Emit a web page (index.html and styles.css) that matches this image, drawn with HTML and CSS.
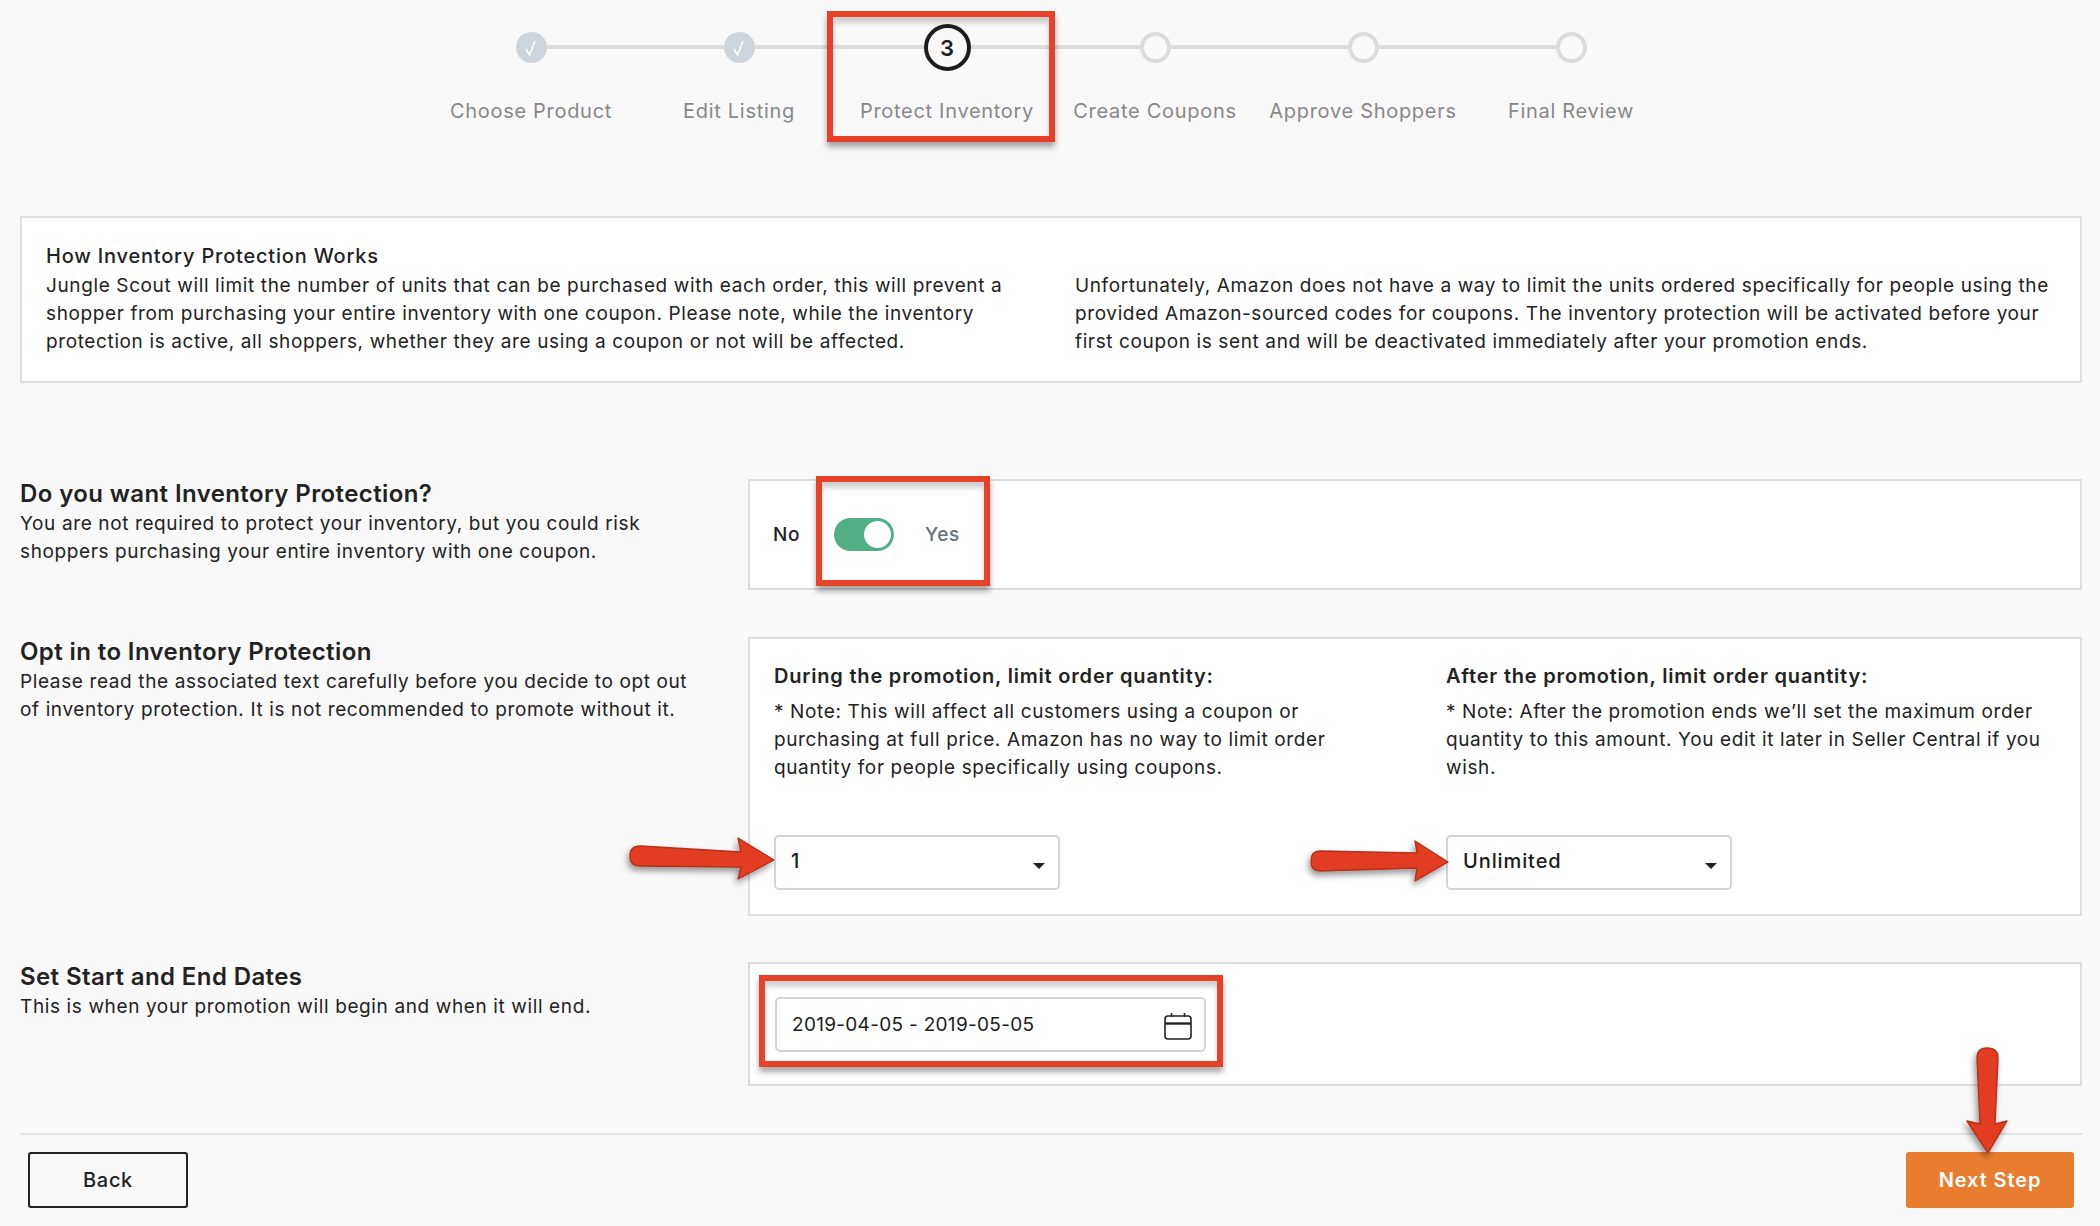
FILE: index.html
```html
<!DOCTYPE html>
<html lang="en">
<head>
<meta charset="utf-8">
<title>Protect Inventory</title>
<link rel="stylesheet" href="styles.css">
</head>
<body>
<ol class="stepper">
  <li class="step done"><span class="dot"><svg width="18" height="18" viewBox="0 0 18 18"><path d="M4 10 L7.5 16 L13 2" fill="none" stroke="#fff" stroke-width="1.6"/></svg></span><span class="label">Choose Product</span></li>
  <li class="step done"><span class="dot"><svg width="18" height="18" viewBox="0 0 18 18"><path d="M4 10 L7.5 16 L13 2" fill="none" stroke="#fff" stroke-width="1.6"/></svg></span><span class="label">Edit Listing</span></li>
  <li class="step active"><span class="dot">3</span><span class="label">Protect Inventory</span></li>
  <li class="step"><span class="dot"></span><span class="label">Create Coupons</span></li>
  <li class="step"><span class="dot"></span><span class="label">Approve Shoppers</span></li>
  <li class="step"><span class="dot"></span><span class="label">Final Review</span></li>
</ol>

<section class="info">
  <div>
    <h3 class="info-title">How Inventory Protection Works</h3>
    <p>Jungle Scout will limit the number of units that can be purchased with each order, this will prevent a<br>shopper from purchasing your entire inventory with one coupon. Please note, while the inventory<br>protection is active, all shoppers, whether they are using a coupon or not will be affected.</p>
  </div>
  <p class="info-right">Unfortunately, Amazon does not have a way to limit the units ordered specifically for people using the<br>provided Amazon-sourced codes for coupons. The inventory protection will be activated before your<br>first coupon is sent and will be deactivated immediately after your promotion ends.</p>
</section>

<section class="row row-first">
  <div class="intro">
    <h2>Do you want Inventory Protection?</h2>
    <p>You are not required to protect your inventory, but you could risk<br>shoppers purchasing your entire inventory with one coupon.</p>
  </div>
  <div class="panel panel-toggle">
    <span class="no">No</span>
    <span class="toggle"><span class="knob"></span></span>
    <span class="yes">Yes</span>
  </div>
</section>

<section class="row row-opt">
  <div class="intro">
    <h2>Opt in to Inventory Protection</h2>
    <p>Please read the associated text carefully before you decide to opt out<br>of inventory protection. It is not recommended to promote without it.</p>
  </div>
  <div class="panel panel-limits">
    <div class="limit">
      <h4>During the promotion, limit order quantity:</h4>
      <p>* Note: This will affect all customers using a coupon or<br>purchasing at full price. Amazon has no way to limit order<br>quantity for people specifically using coupons.</p>
      <div class="select">1<span class="caret"></span></div>
    </div>
    <div class="limit">
      <h4>After the promotion, limit order quantity:</h4>
      <p>* Note: After the promotion ends we’ll set the maximum order<br>quantity to this amount. You edit it later in Seller Central if you<br>wish.</p>
      <div class="select">Unlimited<span class="caret"></span></div>
    </div>
  </div>
</section>

<section class="row">
  <div class="intro">
    <h2>Set Start and End Dates</h2>
    <p>This is when your promotion will begin and when it will end.</p>
  </div>
  <div class="panel panel-dates">
    <div class="date">2019-04-05 - 2019-05-05
      <svg class="cal" width="28" height="28" viewBox="0 0 28 28"><rect x="1" y="4" width="26" height="23" rx="3" fill="none" stroke="#222" stroke-width="1.6"/><path d="M1 11.5H27" stroke="#222" stroke-width="2.4"/><path d="M7.5 1V5M20.5 1V5" stroke="#222" stroke-width="1.6"/></svg>
    </div>
  </div>
</section>

<footer class="footer">
  <button class="btn btn-back">Back</button>
  <button class="btn btn-next">Next Step</button>
</footer>

<div class="mark mark-step"></div>
<div class="mark mark-toggle"></div>
<div class="mark mark-date"></div>

<svg class="arrow arrow-a" width="155" height="50" viewBox="0 0 155 50"><defs><filter id="s" x="-20%" y="-30%" width="140%" height="170%"><feDropShadow dx="-2" dy="4" stdDeviation="3" flood-color="#000" flood-opacity=".4"/></filter></defs><path d="M12 12 Q2 12 2 22 Q2 32 12 32 L113 33 L110 45 L146 26 L110 4 L113 18 Z" fill="#e23c22" stroke="#b5301c" stroke-width="1.4" stroke-linejoin="round" filter="url(#s)"/></svg>
<svg class="arrow arrow-b" width="145" height="50" viewBox="0 0 145 50"><path d="M10 13 Q1 13 1 23 Q1 33 10 33 L107 30 L105 43 L138 24 L105 3 L107 15 Z" fill="#e23c22" stroke="#b5301c" stroke-width="1.4" stroke-linejoin="round" filter="url(#s)"/></svg>
<svg class="arrow arrow-c" width="50" height="112" viewBox="0 0 50 112"><path d="M15 12 Q15 2 25 2 Q36 2 36 12 L33 78 L45 75 L26 107 L5 75 L18 78 Z" fill="#e23c22" stroke="#b5301c" stroke-width="1.4" stroke-linejoin="round" filter="url(#s)"/></svg>
</body>
</html>
```

FILE: styles.css
```css
*, *::before { box-sizing: border-box; }
html, body { margin: 0; }
body {
  position: relative;
  height: 1226px;
  overflow: hidden;
  padding: 0 18px 0 20px;
  background: #f9f9f9;
  color: #222;
  font: 400 19px/28px Inter, "Liberation Sans", sans-serif;
  letter-spacing: .62px;
}
h2, h3, h4, p { margin: 0; font-weight: 400; }

.stepper {
  display: flex;
  justify-content: center;
  list-style: none;
  margin: 0 0 91px;
  padding: 24px 0 0;
}
.step {
  position: relative;
  width: 208px;
  display: flex;
  flex-direction: column;
  align-items: center;
}
.step::before {
  content: "";
  position: absolute;
  top: 21px;
  left: 50%;
  width: 100%;
  height: 4px;
  background: #dcdcdc;
}
.step:last-child::before { display: none; }
.dot {
  position: relative;
  width: 47px;
  height: 47px;
  display: flex;
  align-items: center;
  justify-content: center;
  margin-bottom: 26px;
}
.dot::before {
  content: "";
  position: absolute;
  left: 8px;
  top: 8px;
  width: 31px;
  height: 31px;
  border-radius: 50%;
  border: 4px solid #dcdcdc;
  background: #f9f9f9;
}
.done .dot::before { background: #cdd5dc; border-color: #cdd5dc; }
.active .dot::before { left: 0; top: 0; width: 47px; height: 47px; border-color: #1c1c1c; z-index: -1; }
.dot svg { position: relative; }
.active .dot { z-index: 1; font-weight: 600; font-size: 22px; letter-spacing: 0; color: #1c1c1c; isolation: isolate; }
.label { color: #888; font-size: 20px; letter-spacing: .7px; white-space: nowrap; }

.info {
  display: grid;
  grid-template-columns: 1029px 1fr;
  height: 167px;
  padding: 23px 24px 0;
  background: #fff;
  border: 2px solid #dedede;
}
.info-title { line-height: 31px; font-size: 20px; font-weight: 500; letter-spacing: .8px; }
.info-right { padding-top: 31px; }
.info p { white-space: nowrap; }

.row {
  display: grid;
  grid-template-columns: 728px 1fr;
  margin-top: 46px;
}
.row-first { margin-top: 96px; }
.row-opt { margin-top: 47px; }
.intro h2 { font-size: 24px; line-height: 30px; font-weight: 600; letter-spacing: .4px; margin-bottom: 1px; }
.intro p { white-space: nowrap; }

.panel { background: #fff; border: 2px solid #dedede; }
.panel-toggle {
  display: flex;
  align-items: center;
  height: 111px;
  padding-left: 23px;
}
.no { font-weight: 500; width: 61px; }
.toggle {
  display: block;
  position: relative;
  width: 60px;
  height: 33px;
  border-radius: 17px;
  background: #52ae85;
  margin-right: 31px;
}
.knob {
  position: absolute;
  right: 3px;
  top: 3px;
  width: 27px;
  height: 27px;
  border-radius: 50%;
  background: #fff;
}
.yes { color: #65727d; font-weight: 500; }

.panel-limits {
  display: grid;
  grid-template-columns: 672px 1fr;
  height: 279px;
  padding: 23px 23px 0 24px;
}
.limit h4 { font-size: 20px; font-weight: 600; letter-spacing: .8px; margin-bottom: 8px; }
.limit p { white-space: nowrap; }
.select {
  position: relative;
  width: 286px;
  height: 55px;
  margin-top: 53px;
  padding: 10px 15px;
  background: #fff;
  border: 2px solid #d4d4d4;
  border-radius: 5px;
  font-size: 20px;
  letter-spacing: .9px;
  font-weight: 500;
  color: #1c1c1c;
}
.caret {
  position: absolute;
  right: 13px;
  top: 26px;
  width: 0;
  height: 0;
  border: 6px solid transparent;
  border-top-color: #222;
  border-bottom: 0;
}

.panel-dates { height: 124px; padding: 33px 25px 0; }
.date {
  display: flex;
  align-items: center;
  justify-content: space-between;
  width: 431px;
  height: 55px;
  padding: 0 12px 0 15px;
  background: #fff;
  border: 2px solid #d4d4d4;
  border-radius: 5px;
  letter-spacing: .3px;
  color: #1c1c1c;
}
.cal { margin-top: 3px; }

.footer {
  display: flex;
  justify-content: space-between;
  margin-top: 47px;
  padding: 17px 8px 0 8px;
  border-top: 2px solid #e3e3e3;
}
.btn {
  height: 56px;
  font: 500 20px Inter, "Liberation Sans", sans-serif;
  letter-spacing: .7px;
  border-radius: 3px;
  cursor: pointer;
}
.btn-back { width: 160px; background: transparent; border: 2px solid #222; color: #222; }
.btn-next { width: 168px; background: #e87d2f; border: 0; color: #fff; font-weight: 600; letter-spacing: .9px; }

.mark {
  position: absolute;
  border: 6px solid #e8412a;
  box-shadow: 0 5px 6px rgba(0, 0, 0, .35), inset 0 6px 5px rgba(0, 0, 0, .18);
  pointer-events: none;
}
.mark-step { left: 827px; top: 11px; width: 228px; height: 131px; }
.mark-toggle { left: 816px; top: 476px; width: 174px; height: 110px; }
.mark-date { left: 759px; top: 975px; width: 464px; height: 92px; }

.arrow { position: absolute; overflow: visible; }
.arrow-a { left: 628px; top: 834px; }
.arrow-b { left: 1310px; top: 838px; }
.arrow-c { left: 1962px; top: 1046px; }
```
